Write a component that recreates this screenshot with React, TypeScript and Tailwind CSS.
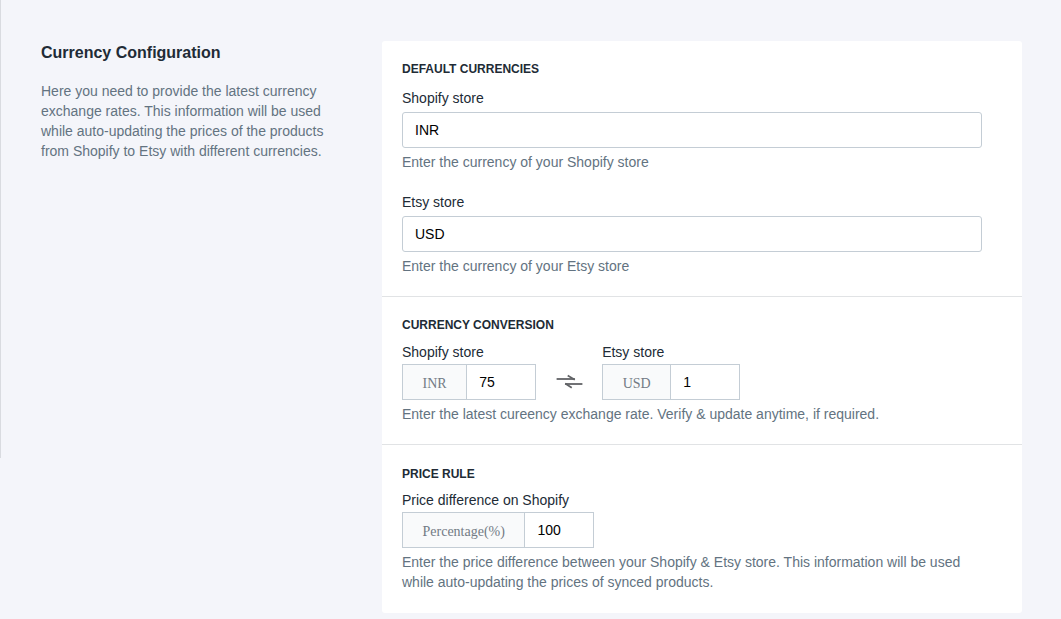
import React from 'react';

const font = "font-['Liberation_Sans',Arial,sans-serif]";

function SectionTitle({ children }: { children: React.ReactNode }) {
  return <h3 className="text-xs leading-4 font-bold uppercase text-[#212b36]">{children}</h3>;
}

function Help({ children, className = '' }: { children: React.ReactNode; className?: string }) {
  return <p className={`text-sm leading-5 text-[#637381] max-w-[580px] ${className}`}>{children}</p>;
}

function AddonInput({ addon, value }: { addon: string; value: string }) {
  return (
    <div className="flex h-9 border border-[#c4cdd5] bg-white">
      <span className="flex items-center justify-center px-[19.5px] pt-[3px] bg-[#f9fafb] border-r border-[#c4cdd5] text-sm text-[#737b85] font-['Liberation_Serif','Times_New_Roman',serif]">
        {addon}
      </span>
      <input
        defaultValue={value}
        className="w-[68px] px-3 text-sm text-black outline-none bg-white"
      />
    </div>
  );
}

// two half-headed arrows, one each way
function ExchangeIcon() {
  return (
    <svg width="27" height="16" viewBox="0 0 27 16" fill="none" stroke="#616366" strokeWidth="1.8" strokeLinecap="square">
      <path d="M1.5 5H18" />
      <path d="M12.5 2L18 5.3" />
      <path d="M10 10H25.5" />
      <path d="M10 10L15 13.2" />
    </svg>
  );
}

export default function App() {
  return (
    <div className={`min-h-screen w-full bg-[#f4f5fa] flex ${font}`}>
      <div className="w-px h-[458px] bg-[#d9dbe0] shrink-0" />

      <div className="flex items-start pl-10 pt-[41px]">
        {/* description column */}
        <div className="w-[300px] shrink-0">
          <h2 className="text-base leading-6 font-bold text-[#212b36]">Currency Configuration</h2>
          <p className="mt-4 text-sm leading-5 text-[#637381]">
            Here you need to provide the latest currency exchange rates. This information will be used while auto-updating the prices of the products from Shopify to Etsy with different currencies.
          </p>
        </div>

        {/* settings card */}
        <div className="ml-[41px] w-[640px] bg-white rounded-[3px]">
          <section className="px-5 pt-5 pb-5">
            <SectionTitle>Default currencies</SectionTitle>
            <label className="block mt-[11px] text-sm leading-5 text-[#212b36]">Shopify store</label>
            <input
              defaultValue="INR"
              className="mt-1 block w-[580px] h-9 px-3 text-sm text-black border border-[#c4cdd5] rounded-[3px] outline-none"
            />
            <Help className="mt-1">Enter the currency of your Shopify store</Help>

            <label className="block mt-5 text-sm leading-5 text-[#212b36]">Etsy store</label>
            <input
              defaultValue="USD"
              className="mt-1 block w-[580px] h-9 px-3 text-sm text-black border border-[#c4cdd5] rounded-[3px] outline-none"
            />
            <Help className="mt-1">Enter the currency of your Etsy store</Help>
          </section>

          <section className="px-5 pt-5 pb-5 border-t border-[#e1e3e5]">
            <SectionTitle>Currency conversion</SectionTitle>
            <div className="mt-[9px] flex items-end">
              <div>
                <label className="block text-sm leading-5 text-[#212b36]">Shopify store</label>
                <div className="mt-0.5">
                  <AddonInput addon="INR" value="75" />
                </div>
              </div>
              <div className="h-9 w-[27px] ml-5 mr-[19px] flex items-center">
                <ExchangeIcon />
              </div>
              <div>
                <label className="block text-sm leading-5 text-[#212b36]">Etsy store</label>
                <div className="mt-0.5">
                  <AddonInput addon="USD" value="1" />
                </div>
              </div>
            </div>
            <Help className="mt-1">Enter the latest cureency exchange rate. Verify &amp; update anytime, if required.</Help>
          </section>

          <section className="px-5 pt-[21px] pb-[21px] border-t border-[#e1e3e5]">
            <SectionTitle>Price rule</SectionTitle>
            <label className="block mt-2 text-sm leading-5 text-[#212b36]">Price difference on Shopify</label>
            <div className="mt-0.5 flex">
              <AddonInput addon="Percentage(%)" value="100" />
            </div>
            <Help className="mt-1">
              Enter the price difference between your Shopify &amp; Etsy store. This information will be used while auto-updating the prices of synced products.
            </Help>
          </section>
        </div>
      </div>
    </div>
  );
}
